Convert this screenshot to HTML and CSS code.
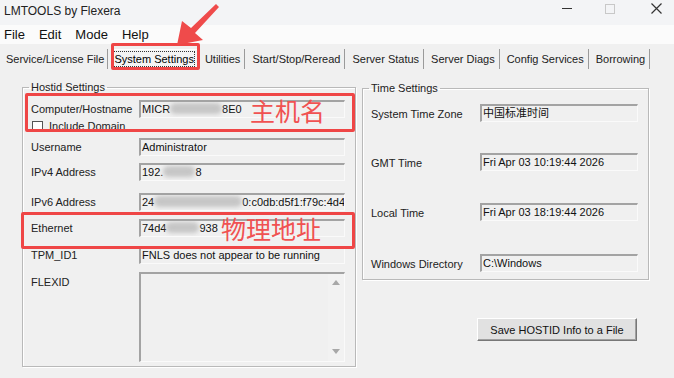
FILE: index.html
```html
<!DOCTYPE html>
<html lang="en">
<head>
  <meta charset="UTF-8">
  <title>LMTOOLS by Flexera</title>
  <link rel="stylesheet" href="styles.css">
</head>
<body>
  <div class="window">
    <div class="titlebar">
      <span class="title">LMTOOLS by Flexera</span>
      <div class="controls">
        <span class="ctl-min"></span>
        <span class="ctl-max"></span>
        <svg class="ctl-close" width="11" height="11" viewBox="0 0 11 11"><path d="M0.5 0.5 L10.5 10.5 M10.5 0.5 L0.5 10.5" stroke="#333" stroke-width="1.2"/></svg>
      </div>
    </div>

    <div class="menubar">
      <span>File</span>
      <span>Edit</span>
      <span>Mode</span>
      <span>Help</span>
    </div>

    <div class="tabs">
      <span class="tab first">Service/License File</span>
      <span class="tab active"><span class="focus">System Settings</span></span>
      <span class="tab">Utilities</span>
      <span class="tab">Start/Stop/Reread</span>
      <span class="tab">Server Status</span>
      <span class="tab">Server Diags</span>
      <span class="tab">Config Services</span>
      <span class="tab">Borrowing</span>
    </div>

    <div class="page">
      <fieldset class="group hostid">
        <legend>Hostid Settings</legend>
        <div class="row r-host">
          <label>Computer/Hostname</label>
          <div class="field">MICR<span class="blur" style="width:52px"></span>8E0</div>
        </div>
        <div class="check-row">
          <span class="checkbox"></span>
          <span>Include Domain</span>
        </div>
        <div class="row r-user">
          <label>Username</label>
          <div class="field">Administrator</div>
        </div>
        <div class="row r-ipv4">
          <label>IPv4 Address</label>
          <div class="field">192.<span class="blur" style="width:32px"></span>8</div>
        </div>
        <div class="row r-ipv6">
          <label>IPv6 Address</label>
          <div class="field">24<span class="blur" style="width:88px"></span>0:c0db:d5f1:f79c:4d4</div>
        </div>
        <div class="row r-eth">
          <label>Ethernet</label>
          <div class="field">74d4<span class="blur" style="width:33px"></span>938</div>
        </div>
        <div class="row r-tpm">
          <label>TPM_ID1</label>
          <div class="field">FNLS does not appear to be running</div>
        </div>
        <div class="row r-flex">
          <label>FLEXID</label>
          <div class="field textarea">
            <div class="scrollbar">
              <span class="arrow-up"></span>
              <span class="arrow-down"></span>
            </div>
          </div>
        </div>
      </fieldset>

      <div class="right-col">
        <fieldset class="group time">
          <legend>Time Settings</legend>
          <div class="row t-zone">
            <label>System Time Zone</label>
            <div class="field cjk">中国标准时间</div>
          </div>
          <div class="row t-gmt">
            <label>GMT Time</label>
            <div class="field">Fri Apr 03 10:19:44 2026</div>
          </div>
          <div class="row t-local">
            <label>Local Time</label>
            <div class="field">Fri Apr 03 18:19:44 2026</div>
          </div>
          <div class="row t-dir">
            <label>Windows Directory</label>
            <div class="field">C:\Windows</div>
          </div>
        </fieldset>
        <button class="save-btn">Save HOSTID Info to a File</button>
      </div>
    </div>
  </div>

  <!-- screenshot annotations -->
  <div class="mark mark-tab"></div>
  <div class="mark mark-host"></div>
  <div class="mark mark-eth"></div>
  <span class="note note-host">主机名</span>
  <span class="note note-eth">物理地址</span>
  <svg class="arrow" width="60" height="50" viewBox="0 0 60 50">
    <polygon points="3,44 8,20 17,27 42,3 45,6 21,32 29,39" fill="#ef4b4b"/>
  </svg>
</body>
</html>
```

FILE: styles.css
```css
body {
  margin: 0;
  background-color: #f0f0f0;
  font-family: 'Liberation Sans', Arial, sans-serif;
  font-size: 11px;
  color: #111;
  width: 674px;
  height: 378px;
  overflow: hidden;
}
.window {
  display: flex;
  flex-direction: column;
}
.titlebar {
  height: 25px;
  background-color: #f3f4f6;
  display: flex;
  align-items: center;
  justify-content: space-between;
  padding-left: 4px;
}
.title {
  font-size: 12px;
  color: #222;
  margin-top: -4px;
}
.controls {
  display: flex;
  align-items: center;
  height: 25px;
  margin-top: -8px;
}
.ctl-min {
  width: 10px;
  height: 1px;
  background: #333;
  margin-right: 33px;
}
.ctl-max {
  width: 8px;
  height: 8px;
  border: 1px solid #c8c8c8;
  margin-right: 36px;
}
.ctl-close {
  margin-right: 12px;
}
.menubar {
  height: 19px;
  background-color: #fbfbfb;
  display: flex;
  align-items: center;
  gap: 14px;
  padding-left: 4px;
  font-size: 13px;
  color: #111;
}
.tabs {
  display: flex;
  margin-top: 5px;
  height: 20px;
  align-items: stretch;
  padding-left: 3px;
}
.tab {
  display: flex;
  align-items: center;
  padding: 0 4px;
  border-right: 1px solid #9a9a9a;
  margin-right: 3px;
  color: #222;
}
.tab.first {
  padding: 0 3px;
}
.tab.active {
  background: #f4f4f4;
  border: 1px solid #fff;
  border-right-color: #888;
  padding: 0 2px 0 1px;
}
.focus {
  border: 1px dotted #333;
  padding: 1px 0;
  color: #000;
}
.page {
  display: flex;
  padding-left: 22px;
  gap: 6px;
  margin-top: 12px;
}
.group {
  margin: 0;
  padding: 0 8px;
  border: 1px solid #b9b9b9;
  box-shadow: inset 1px 1px 0 #fff, 1px 1px 0 #fff;
  box-sizing: border-box;
}
.group legend {
  padding: 0 2px;
  margin-left: -2px;
  line-height: 13px;
  color: #222;
}
.hostid {
  width: 334px;
  height: 286px;
}
.time {
  width: 287px;
  height: 198px;
  margin-top: 1px;
}
.row {
  display: flex;
  align-items: center;
  height: 18px;
}
.row label {
  width: 108px;
  flex-shrink: 0;
  color: #222;
}
.field {
  box-sizing: border-box;
  width: 206px;
  height: 18px;
  border-top: 2px solid #a3a3a3;
  border-left: 2px solid #a3a3a3;
  border-right: 1px solid #fafafa;
  border-bottom: 1px solid #fafafa;
  padding-left: 1px;
  white-space: nowrap;
  overflow: hidden;
  line-height: 15px;
  color: #111;
}
.blur {
  display: inline-block;
  height: 11px;
  vertical-align: -1px;
  background: #c6c6c6;
  filter: blur(2px);
  border-radius: 6px;
}
.r-host { margin-top: 6px; }
.check-row {
  display: flex;
  align-items: center;
  gap: 6px;
  height: 12px;
  margin-top: 2px;
  padding-left: 1px;
  color: #222;
}
.checkbox {
  width: 9px;
  height: 9px;
  border: 1px solid #555;
  background: #fff;
}
.r-user { margin-top: 6px; }
.r-ipv4 { margin-top: 7px; }
.r-ipv6 { margin-top: 12px; }
.r-eth { margin-top: 8px; }
.r-tpm { margin-top: 9px; }
.r-flex {
  margin-top: 8px;
  height: 90px;
  align-items: flex-start;
}
.r-flex label {
  margin-top: 4px;
}
.textarea {
  height: 90px;
  display: flex;
  justify-content: flex-end;
}
.scrollbar {
  width: 16px;
  height: 100%;
  background: #f2f2f2;
  display: flex;
  flex-direction: column;
  justify-content: space-between;
  align-items: center;
  padding: 6px 0 7px;
  box-sizing: border-box;
}
.arrow-up {
  width: 0;
  height: 0;
  border-left: 4px solid transparent;
  border-right: 4px solid transparent;
  border-bottom: 5px solid #a8a8a8;
}
.arrow-down {
  width: 0;
  height: 0;
  border-left: 4px solid transparent;
  border-right: 4px solid transparent;
  border-top: 5px solid #a8a8a8;
}
.time label {
  width: 109px;
  padding-top: 2px;
}
.time .field {
  width: 158px;
}
.cjk {
  font-family: 'Liberation Sans', 'Noto Sans CJK SC', sans-serif;
}
.t-zone { margin-top: 9px; }
.t-gmt { margin-top: 31px; }
.t-local { margin-top: 32px; }
.t-dir { margin-top: 33px; }
.right-col {
  display: flex;
  flex-direction: column;
}
.save-btn {
  margin: 38px 0 0 115px;
  width: 160px;
  height: 23px;
  background: #e1e1e1;
  border: 1px solid;
  border-color: #fff #777 #777 #fff;
  box-shadow: inset -1px -1px 0 #a0a0a0;
  font-family: 'Liberation Sans', Arial, sans-serif;
  font-size: 11px;
  color: #111;
  padding: 0;
}

/* annotations drawn over the screenshot */
.mark {
  position: absolute;
  border: 3px solid #ef4646;
  border-radius: 2px;
  box-sizing: border-box;
}
.mark-tab { left: 111px; top: 43px; width: 89px; height: 27px; }
.mark-host { left: 25px; top: 93px; width: 330px; height: 39px; }
.mark-eth { left: 21px; top: 212px; width: 334px; height: 37px; }
.note {
  position: absolute;
  font-family: 'Noto Sans CJK SC', sans-serif;
  font-size: 25px;
  line-height: 26px;
  color: #f05252;
}
.note-host { left: 250px; top: 97px; }
.note-eth { left: 221px; top: 215px; }
.arrow {
  position: absolute;
  left: 174px;
  top: 1px;
}
```
